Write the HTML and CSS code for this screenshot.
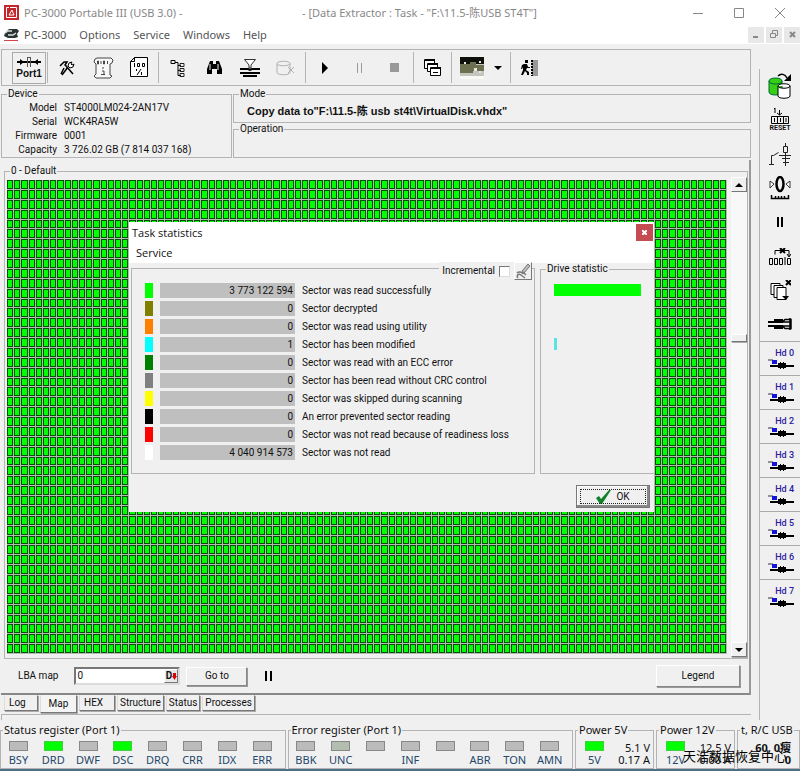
FILE: index.html
```html
<!DOCTYPE html>
<html lang="en">
<head>
    <meta charset="UTF-8">
    <meta name="viewport" content="width=device-width, initial-scale=1.0">
    <title>PC-3000 Portable III</title>
    <link rel="stylesheet" href="styles.css">
</head>
<body>
    <svg class="defs" aria-hidden="true">
        <symbol id="hd" viewBox="0 0 26 10">
            <path d="M0 1h5" stroke="#333" fill="none"/>
            <rect x="4" y="1" width="5" height="4" fill="#1414d8"/>
            <path d="M2 7h24" stroke="#000" stroke-width="2"/>
            <path d="M10 4h2v-1h1v1h2v-1h1v1h2v5h-2v1h-1v-1h-2v1h-1v-1h-2z"/>
        </symbol>
    </svg>

    <header>
        <div class="titlebar">
            <svg class="logo" width="15" height="15" viewBox="0 0 15 15">
                <rect width="15" height="15" fill="#c4262c"/>
                <path d="M5 2.500H2.500v10H5M6 2.500h6.500v10H5M5 10l3-5 2 5z" fill="none" stroke="#fff"/>
            </svg>
            <span class="app-name">PC-3000 Portable III (USB 3.0) -</span>
            <span class="doc-name">- [Data Extractor : Task - "F:\11.5-陈USB ST4T"]</span>
            <div class="window-buttons">
                <button aria-label="Minimize"><svg width="10" height="10"><path d="M0 5.500h10"/></svg></button>
                <button aria-label="Maximize"><svg width="10" height="10"><path d="M.5 .5h9v9h-9z"/></svg></button>
                <button aria-label="Close"><svg width="10" height="10"><path d="M0 0l10 10M10 0L0 10"/></svg></button>
            </div>
        </div>
        <nav class="menubar">
            <svg width="15" height="14" viewBox="0 0 15 14">
                <path d="M1 5L5 1h8l2 2-2 3 1 3-3 1H4L0 8z" fill="#2b3434"/>
                <path d="M1 5l3-2h4M4 7h5l3-2" stroke="#ddd" stroke-width="1.500" fill="none"/>
                <path d="M0 12.500h14" stroke="#d2434a"/>
            </svg>
            <button>PC-3000</button>
            <button>Options</button>
            <button>Service</button>
            <button>Windows</button>
            <button>Help</button>
            <div class="child-buttons">
                <button aria-label="Minimize child"><svg width="9" height="9"><path d="M1 7h5" stroke-width="2"/></svg></button>
                <button aria-label="Restore child"><svg width="9" height="9"><path d="M2.500 3V.5h5v5H6M.5 3.500h5v4h-5z"/></svg></button>
                <button aria-label="Close child"><svg width="9" height="9"><path d="M2 2l5 5M7 2L2 7" stroke-width="2"/></svg></button>
            </div>
        </nav>
    </header>

    <div class="workspace">
        <main>
            <div class="toolbar">
                <button class="port">
                    <svg width="26" height="13" viewBox="0 0 26 13"><path d="M1 6h24" stroke="#000" stroke-width="2"/><path d="M4 3l4 3-4 3zM22 3l-4 3 4 3z"/><path d="M11.500 1v10M14.500 1v10M11 1.500h4" stroke="#555" fill="none"/></svg>
                    Port1
                </button>
                <span class="sep"></span>
                <button aria-label="Tools"><svg width="16" height="16" viewBox="0 0 16 16"><path d="M1 6l4-4h3L6 5l2 2M7 6l7 8M5 8l-3 6M9 7l-6 8" fill="none" stroke="#000" stroke-width="1.500"/><path d="M13 2l-3 1-1 3 2 2 3-1 1-3-2 1-1-1z" fill="#fff" stroke="#000"/></svg></button>
                <button aria-label="Script"><svg width="21" height="22" viewBox="0 0 21 22"><path d="M4 1h14l2 2-1 3-2 1v11l2 1-2 2H3l-2-2 2-2V7L1 5l1-3z" fill="#f8f8f8" stroke="#444"/><path d="M4.500 4h1v3h-1zM8 4v3M10.500 4h1v3h-1zM14.500 4v3M10 10v2M9 14h2v3M8 17.500h4" fill="none" stroke="#444"/></svg></button>
                <button aria-label="Percent"><svg width="18" height="21" viewBox="0 0 18 21"><path d="M4.500 .5h13v19H.5V4.500zM.5 4.500h4v-4" fill="#fff" stroke="#000"/><path d="M4.500 6v4M7.500 6.500h2v3h-2zM12.500 6.500h2v3h-2zM6.500 12v2M11 12l-4 6M11.500 15v3" stroke="#000" fill="none"/></svg></button>
                <span class="sep"></span>
                <button aria-label="Tree"><svg width="16" height="18" viewBox="0 0 16 18"><path d="M1 1.500h4v3H1zM5 3.500h3v13h3M8 6.500h3M8 11.500h3" fill="none" stroke="#000"/><path d="M10 4.500h4v3h-4zM10 9.500h4v3h-4zM10 14.500h4v3h-4z" fill="none" stroke="#222"/></svg></button>
                <button aria-label="Find"><svg width="15" height="13" viewBox="0 0 15 13"><path d="M3 0h3v4h3V0h3l3 8v5h-5V8H5v5H0V8zM6 3h3v3H6z"/><path d="M3 3v6M11 3v6" stroke="#eee"/></svg></button>
                <button aria-label="Filter"><svg width="20" height="18" viewBox="0 0 20 18"><path d="M4.500 .5h11L11 6v3H9V6z" fill="#fff" stroke="#333"/><path d="M0 10h8l2 1 2-1h8M0 14h20M3 17h14" stroke="#000" stroke-width="2" fill="none"/></svg></button>
                <button aria-label="Database"><svg width="20" height="16" viewBox="0 0 20 16"><path d="M1 3.500c0-3 13-3 13 0v9c0 3-13 3-13 0zM1 3.500c0 3 13 3 13 0M12 7l6 6M18 7l-6 6" fill="none" stroke="#b0b0b0"/></svg></button>
                <span class="sep"></span>
                <button class="slim" aria-label="Start"><svg width="6" height="12"><path d="M0 0l6 6-6 6z"/></svg></button>
                <button class="slim" aria-label="Pause"><svg width="7" height="10"><path d="M1.500 0v10M5.500 0v10" stroke="#999"/></svg></button>
                <button class="slim" aria-label="Stop"><svg width="9" height="9"><path d="M0 0h9v9H0z" fill="#999"/></svg></button>
                <span class="sep"></span>
                <button class="slim" aria-label="Cascade"><svg width="18" height="18" viewBox="0 0 18 18"><g fill="#fff" stroke="#000"><path d="M.5 .5h10v9h-10z"/><path d="M3.500 4.500h10v8h-10z"/><path d="M6.500 8.500h10v8h-10z"/></g><path d="M1 1h10M4 5h10M7 9h10" stroke="#000" stroke-width="2"/><path d="M9 13.500h5" stroke="#000"/></svg></button>
                <span class="sep"></span>
                <button class="picture" aria-label="View map"><svg width="24" height="22" viewBox="0 0 24 22"><path d="M0 0h24v22H0z" fill="#c4c5bc"/><path d="M0 0h24v7H0z" fill="#0c0f0a"/><path d="M0 7h10V5h6v3h8v6H13v2H0z" fill="#6d7050"/><path d="M4 5h2v2H4zM19 4h2v2h-2zM14 11h3v3h-3zM19 14h2v2h-2z" fill="#e8e8df"/><path d="M0 19h24v3H0z" fill="#f8f8f5"/></svg>
                    <svg width="8" height="4"><path d="M0 0h8L4 4z"/></svg></button>
                <span class="sep"></span>
                <button class="slim" aria-label="Exit"><svg width="17" height="16" viewBox="0 0 17 16"><path d="M4 0h3v3H4zM3 4h3l1 3h2v1H6l-1 2 3 2v3H6v-2l-2-2-2 4H0l2-5V7L1 9H0l1-4z"/><path d="M11 0h6v16h-6z" fill="#999"/><path d="M11 0v16" stroke="#000" stroke-width="2" stroke-dasharray="2 1"/></svg></button>
            </div>

            <div class="info">
                <fieldset class="device">
                    <legend>Device</legend>
                    <dl>
                        <dt>Model</dt><dd>ST4000LM024-2AN17V</dd>
                        <dt>Serial</dt><dd>WCK4RA5W</dd>
                        <dt>Firmware</dt><dd>0001</dd>
                        <dt>Capacity</dt><dd>3 726.02 GB (7 814 037 168)</dd>
                    </dl>
                </fieldset>
                <div class="modes">
                    <fieldset>
                        <legend>Mode</legend>
                        <p>Copy data to"F:\11.5-陈 usb st4t\VirtualDisk.vhdx"</p>
                    </fieldset>
                    <fieldset>
                        <legend>Operation</legend>
                    </fieldset>
                </div>
            </div>

            <section class="map-panel">
                <fieldset class="map-box">
                    <legend>0 - Default</legend>
                    <div class="map-row">
                        <div class="map-area"><canvas id="map"></canvas></div>
                        <div class="scrollbar">
                            <button aria-label="Scroll up"><svg width="8" height="4"><path d="M4 0l4 4H0z"/></svg></button>
                            <div class="track"><div class="thumb"></div></div>
                            <button aria-label="Scroll down"><svg width="8" height="4"><path d="M0 0h8L4 4z"/></svg></button>
                        </div>
                    </div>
                </fieldset>
                <div class="lba">
                    <label for="lba">LBA map</label>
                    <div class="lba-input">
                        <input type="text" id="lba" value="0">
                        <button>D<svg width="5" height="7"><path d="M1 0h3v3h1L2.500 7 0 3h1z" fill="#d00"/></svg></button>
                    </div>
                    <button class="btn">Go to</button>
                    <button class="plain" aria-label="Pause map"><svg width="7" height="10"><path d="M1 0v10M6 0v10" stroke="#000" stroke-width="2"/></svg></button>
                    <button class="btn legend-btn">Legend</button>
                </div>
            </section>
            <div class="tabs">
                <button class="log">Log</button>
                <button class="active">Map</button>
                <button class="hex">HEX</button>
                <button>Structure</button>
                <button>Status</button>
                <button>Processes</button>
            </div>
            <div class="tab-line"></div>
        </main>

        <aside>
            <button aria-label="Copy database"><svg width="24" height="27" viewBox="0 0 24 27"><path d="M1 8c0-4 13-4 13 0v11c0 4-13 4-13 0z" fill="#35d015" stroke="#063"/><path d="M1 8c0 4 13 4 13 0" fill="none" stroke="#063"/><path d="M10 13c0-3 12-3 12 0v10c0 3-12 3-12 0zM10 13c0 3 12 3 12 0" fill="#fff" stroke="#000"/><path d="M10 3c3-3 7-2 9 2" fill="none" stroke="#000" stroke-width="1.500"/><path d="M23 1v7h-7z"/></svg></button>
            <button class="reset" aria-label="Reset"><svg width="18" height="16" viewBox="0 0 18 16"><path d="M3 1l1-1v5M8.500 2v5M6 5l2.500 2L11 5M.5 8.500h17v7H.5zM6.500 8v8M12.500 8v8" fill="none" stroke="#000"/><path d="M3.500 10v4M9.500 10v4M15 10v4" fill="none" stroke="#000"/></svg>RESET</button>
            <button aria-label="Power"><svg width="22" height="23" viewBox="0 0 22 23"><path d="M0 21.500h5M2.500 21V12.500h2l5-3M16.500 0v3M14.500 3.500h4v6h-4zM16.500 10v13M10 12.500h12M13 15.500h8M14 19.500h6" fill="none" stroke="#222"/></svg></button>
            <button class="zero" aria-label="Recalibrate"><svg width="22" height="24" viewBox="0 0 22 24"><ellipse cx="11" cy="8" rx="3.500" ry="7" fill="none" stroke="#000" stroke-width="2.500"/><path d="M1 5l4 3-4 4zM21 5l-4 3 4 4z" fill="#fff" stroke="#333"/><path d="M2.500 19v3.500h17V19M6.500 20v3M9.500 20v3M12.500 20v3M15.500 20v3" fill="none" stroke="#000" stroke-width="1.500"/></svg></button>
            <button aria-label="Pause drive"><svg width="6" height="10"><path d="M1 0v10M5 0v10" stroke="#000" stroke-width="2"/></svg></button>
            <button aria-label="Sectors"><svg width="22" height="17" viewBox="0 0 22 17"><path d="M6 6.500V2.500h14V8M18 6l2 3 2-3" fill="none" stroke="#000"/><path d="M11 0l5 5M16 0l-5 5" stroke="#000" stroke-width="2"/><path d="M.5 10.500h3v6h-3zM5.500 10.500h3v6h-3zM10.500 10.500h3v6h-3zM18.500 10.500h3v6h-3zM16 9v8" fill="none" stroke="#000"/></svg></button>
            <button aria-label="Copy pages"><svg width="21" height="21" viewBox="0 0 21 21"><g fill="#fff" stroke="#000"><path d="M1 3.500h9v11H1z"/><path d="M4 5.500h9v12H4z"/><path d="M7 7.500h9v12H7z"/></g><path d="M16 0l5 5M21 0l-5 5" stroke="#000" stroke-width="2"/><path d="M12 16h7l-3 4z"/></svg></button>
            <button aria-label="Connector"><svg width="24" height="12" viewBox="0 0 24 12"><path d="M0 4h14M0 8h14" stroke="#000" stroke-width="2"/><path d="M6 1h9v4H6zM6 7h9v4H6z"/><path d="M14 4.500l3-3h6v9h-6l-3-3M15 4h8M15 8h8M22 0v12" stroke="#000" stroke-width="1.500" fill="none"/></svg></button>
            <button class="hd">Hd 0<svg width="26" height="10"><use href="#hd"/></svg></button>
            <button class="hd">Hd 1<svg width="26" height="10"><use href="#hd"/></svg></button>
            <button class="hd">Hd 2<svg width="26" height="10"><use href="#hd"/></svg></button>
            <button class="hd">Hd 3<svg width="26" height="10"><use href="#hd"/></svg></button>
            <button class="hd">Hd 4<svg width="26" height="10"><use href="#hd"/></svg></button>
            <button class="hd">Hd 5<svg width="26" height="10"><use href="#hd"/></svg></button>
            <button class="hd">Hd 6<svg width="26" height="10"><use href="#hd"/></svg></button>
            <button class="hd">Hd 7<svg width="26" height="10"><use href="#hd"/></svg></button>
        </aside>
    </div>

    <footer>
        <fieldset class="register">
            <legend>Status register (Port 1)</legend>
            <div class="leds">
                <span><i></i>BSY</span>
                <span><i class="on"></i>DRD</span>
                <span><i></i>DWF</span>
                <span><i class="on"></i>DSC</span>
                <span><i></i>DRQ</span>
                <span><i></i>CRR</span>
                <span><i></i>IDX</span>
                <span><i></i>ERR</span>
            </div>
        </fieldset>
        <fieldset class="register">
            <legend>Error register (Port 1)</legend>
            <div class="leds">
                <span><i></i>BBK</span>
                <span><i class="dim"></i>UNC</span>
                <span><i></i></span>
                <span><i></i>INF</span>
                <span><i></i></span>
                <span><i></i>ABR</span>
                <span><i></i>TON</span>
                <span><i></i>AMN</span>
            </div>
        </fieldset>
        <fieldset class="power">
            <legend>Power 5V</legend>
            <div class="leds">
                <span><i class="on"></i>5V</span>
                <p>5.1 V<br>0.17 A</p>
            </div>
        </fieldset>
        <fieldset class="power">
            <legend>Power 12V</legend>
            <div class="leds">
                <span><i class="on"></i>12V</span>
                <p>12.5 V<br>0.00 A</p>
            </div>
        </fieldset>
        <fieldset class="usb">
            <legend>t, R/C USB</legend>
            <p>60, 0瘦<br>0</p>
        </fieldset>
        <div class="watermark">天浩数据恢复中心</div>
    </footer>

    <div class="dialog" role="dialog" aria-labelledby="dialog-title">
        <div class="dialog-title">
            <span id="dialog-title">Task statistics</span>
            <button aria-label="Close dialog"><svg width="5" height="5"><path d="M0 0l5 5M5 0L0 5" stroke="#fff" stroke-width="2"/></svg></button>
        </div>
        <div class="dialog-menu"><button>Service</button></div>
        <div class="dialog-body">
            <div class="stats">
                <div class="incremental">
                    <label for="inc">Incremental</label>
                    <input type="checkbox" id="inc">
                    <button aria-label="Clear"><svg width="16" height="16" viewBox="0 0 16 16"><path d="M7 8l6-7 2 2-6 7z" fill="#bbb" stroke="#777"/><path d="M2 10c2-2 5-1 6 1M3 15c-2-2 0-5 3-3l4 3M8 9l3 3" fill="none" stroke="#777" stroke-width="1.500"/></svg></button>
                </div>
                <table>
                    <tr><td class="c-read"></td><td>3 773 122 594</td><td>Sector was read successfully</td></tr>
                    <tr><td class="c-decrypted"></td><td>0</td><td>Sector decrypted</td></tr>
                    <tr><td class="c-utility"></td><td>0</td><td>Sector was read using utility</td></tr>
                    <tr><td class="c-modified"></td><td>1</td><td>Sector has been modified</td></tr>
                    <tr><td class="c-ecc"></td><td>0</td><td>Sector was read with an ECC error</td></tr>
                    <tr><td class="c-crc"></td><td>0</td><td>Sector has been read without CRC control</td></tr>
                    <tr><td class="c-skipped"></td><td>0</td><td>Sector was skipped during scanning</td></tr>
                    <tr><td class="c-error"></td><td>0</td><td>An error prevented sector reading</td></tr>
                    <tr><td class="c-readiness"></td><td>0</td><td>Sector was not read because of readiness loss</td></tr>
                    <tr><td class="c-notread"></td><td>4 040 914 573</td><td>Sector was not read</td></tr>
                </table>
            </div>
            <fieldset class="drive-stat">
                <legend>Drive statistic</legend>
                <div class="bar bar-read"></div>
                <div class="bar bar-modified"></div>
            </fieldset>
        </div>
        <div class="dialog-footer">
            <button class="ok"><svg width="15" height="14" viewBox="0 0 15 14"><path d="M0 8l3-2 2 3 8-9h2L6 14H4z" fill="#12812c"/></svg>OK</button>
        </div>
    </div>

    <script src="script.js"></script>
</body>
</html>
```
FILE: styles.css
```css
* {
    box-sizing: border-box;
}
body {
    margin: 0;
    min-height: 100vh;
    position: relative;
    display: flex;
    flex-direction: column;
    background-color: #f0f0f0;
    font-family: Roboto, "Noto Sans CJK SC", sans-serif;
    font-size: 10px;
    line-height: 14px;
    color: #111;
}
button, input {
    font: inherit;
    color: inherit;
}
button {
    padding: 0;
    border: none;
    background: none;
    display: flex;
    align-items: center;
    justify-content: center;
}
svg {
    flex: none;
    display: block;
}
p, dl, dd {
    margin: 0;
}
fieldset {
    margin: 0;
    padding: 0;
    min-width: 0;
    border: 1px solid #b4b4b4;
}
legend {
    margin-left: 5px;
    padding: 0 1px;
    line-height: 12px;
}
.defs {
    position: absolute;
    width: 0;
    height: 0;
}

/* header */
.titlebar, .menubar {
    display: flex;
    align-items: center;
    background-color: #fff;
    font-family: "Noto Sans", "Noto Sans CJK SC", sans-serif;
    font-size: 11px;
    color: #888;
}
.titlebar {
    height: 25px;
    padding-left: 4px;
}
.app-name {
    width: 278px;
    margin-left: 5px;
}
.window-buttons {
    display: flex;
    margin-left: auto;
}
.window-buttons button {
    width: 41px;
    height: 24px;
}
.window-buttons svg, .child-buttons svg {
    fill: none;
    stroke: #888;
}
.menubar {
    height: 19px;
    padding-left: 4px;
    gap: 13px;
    color: #555;
}
.menubar > svg {
    margin-right: -8px;
}
.child-buttons {
    display: flex;
    gap: 2px;
    margin-left: auto;
}
.child-buttons button {
    width: 16px;
    height: 16px;
    background-color: #e8e8e8;
}

.workspace {
    flex: 1;
    display: flex;
    margin-top: 5px;
}
main {
    flex: 1;
    min-width: 0;
    display: flex;
    flex-direction: column;
    padding-left: 1px;
}

/* toolbar */
.toolbar {
    display: flex;
    align-items: center;
    height: 37px;
    border: 1px solid #b4b4b4;
    padding-left: 10px;
}
.toolbar button {
    width: 36px;
    height: 32px;
}
.toolbar .slim {
    width: 35px;
}
.toolbar .port {
    flex-direction: column;
    width: 34px;
    border: 1px solid #aaa;
    font-family: "Liberation Sans", sans-serif;
    font-size: 10px;
    line-height: 10px;
    font-weight: bold;
}
.toolbar .picture {
    width: 56px;
    gap: 10px;
}
.sep {
    width: 1px;
    height: 31px;
    margin: 0 1px;
    background-color: #b4b4b4;
}

/* device and mode */
.info {
    display: flex;
    gap: 1px;
    margin-top: 2px;
}
.device {
    width: 231px;
}
.device dl {
    display: grid;
    grid-template-columns: 55px 1fr;
    column-gap: 7px;
    padding: 1px 0 0;
}
dt {
    text-align: right;
}
.modes {
    flex: 1;
    display: flex;
    flex-direction: column;
}
.modes fieldset {
    flex: 1;
}
.modes p {
    padding: 5px 0 0 13px;
    font-family: "Liberation Sans", "Noto Sans CJK SC", sans-serif;
    font-size: 11px;
    line-height: 12px;
    font-weight: bold;
}

/* map */
.map-panel {
    flex: 1;
    display: flex;
    flex-direction: column;
    margin-top: 2px;
    padding: 5px 1px 0 3px;
    border-right: 2px solid #999;
    border-bottom: 2px solid #888;
}
.map-box {
    flex: 1;
    display: flex;
    flex-direction: column;
}
.map-row {
    flex: 1;
    display: flex;
    gap: 4px;
    padding: 0 0 1px 2px;
    height: 100%;
}
.map-area {
    flex: 1;
    min-width: 0;
    position: relative;
    margin: 3px 0;
}
.map-area canvas {
    position: absolute;
    width: 100%;
    height: 100%;
}
.scrollbar {
    width: 16px;
    display: flex;
    flex-direction: column;
}
.scrollbar button, .thumb {
    width: 16px;
    height: 15px;
    border: 1px solid;
    border-color: #fff #777 #777 #fff;
    box-shadow: 1px 1px 0 #aaa;
}
.track {
    flex: 1;
    background-color: #f8f8f8;
}
.thumb {
    height: 8px;
    margin-top: 142px;
    background-color: #f0f0f0;
}
.lba {
    display: flex;
    align-items: center;
    height: 34px;
    padding-left: 14px;
}
.lba-input {
    display: flex;
    width: 106px;
    height: 18px;
    margin: 0 6px 0 16px;
    border: 2px solid;
    border-color: #777 #ddd #ddd #777;
    background-color: #fff;
}
.lba-input input {
    flex: 1;
    min-width: 0;
    padding: 0 1px;
    border: none;
}
.lba-input button {
    width: 14px;
    background-color: #e8e8e8;
    border: 1px solid;
    border-color: #fff #777 #777 #fff;
    font-weight: bold;
}
.btn {
    width: 61px;
    height: 19px;
    border: 1px solid;
    border-color: #fff #888 #888 #fff;
    box-shadow: 1px 1px 0 #999;
}
.plain {
    margin-left: 18px;
}
.legend-btn {
    width: 84px;
    height: 22px;
    margin: 0 8px 0 auto;
}

/* tabs */
.tabs {
    display: flex;
    gap: 2px;
    height: 18px;
    padding-left: 3px;
}
.tabs button {
    height: 16px;
    padding: 0 2px;
    border: 1px solid;
    border-color: transparent #777 #777 #ddd;
    box-shadow: 1px 1px 0 #aaa;
}
.tabs .active {
    height: 18px;
    width: 37px;
    background-color: #f4f4f4;
}
.tabs .log {
    width: 34px;
    padding-left: 4px;
    justify-content: flex-start;
}
.tabs .hex {
    width: 36px;
    padding-left: 4px;
    justify-content: flex-start;
}
.tab-line {
    height: 6px;
    margin-top: 1px;
    border-top: 1px solid #b4b4b4;
    border-left: 1px solid #b4b4b4;
}

/* right bar */
aside {
    width: 41px;
    margin: 20px 0 0 8px;
    border-left: 1px solid #b4b4b4;
}
aside button {
    width: 100%;
    height: 34px;
}
aside .reset {
    flex-direction: column;
    gap: 1px;
    font-size: 7px;
    line-height: 7px;
    font-weight: bold;
}
aside .hd {
    flex-direction: column;
    align-items: flex-end;
    padding-right: 6px;
    border-top: 1px solid #aaa;
    font-size: 9px;
    font-weight: 500;
    line-height: 11px;
    color: #2a1aa0;
}

/* registers */
footer {
    display: flex;
    gap: 2px;
    position: relative;
    margin-top: 4px;
    border-bottom: 2px solid #4d7088;
    font-family: "Noto Sans", "Noto Sans CJK SC", sans-serif;
    font-size: 11px;
}
footer legend {
    margin-left: 2px;
}
.register {
    flex: 1;
}
.leds {
    display: flex;
    padding-bottom: 1px;
}
.register .leds {
    padding-right: 5px;
}
.leds span {
    flex: 1;
    display: flex;
    flex-direction: column;
    align-items: center;
    gap: 2px;
    color: #24476b;
}
.leds i {
    width: 19px;
    height: 10px;
    margin-top: 5px;
    background-color: #bbb;
    border: 1px solid #888;
}
.leds .on {
    background-color: #0f0;
    border-color: #4c4;
}
.leds .dim {
    background-color: #b4beb0;
}
.power {
    width: 79px;
}
footer p {
    flex: 1;
    padding: 6px 3px 0 0;
    line-height: 12px;
    text-align: right;
}
.usb {
    width: 63px;
}
.usb p {
    font-weight: bold;
    padding-right: 8px;
}
.watermark {
    position: absolute;
    right: 13px;
    bottom: 6px;
    font-family: "Noto Sans CJK SC", sans-serif;
    font-size: 13px;
    color: #000;
}

/* dialog */
.dialog {
    position: absolute;
    left: 129px;
    top: 222px;
    width: 525px;
    background-color: #f0f0f0;
}
.dialog-title, .dialog-menu {
    display: flex;
    background-color: #fff;
    font-family: "Open Sans", sans-serif;
    font-size: 11px;
}
.dialog-title {
    justify-content: space-between;
    height: 21px;
    padding: 2px 1px 0 3px;
    line-height: 18px;
}
.dialog-title button {
    width: 17px;
    height: 17px;
    background-color: #c44c52;
}
.dialog-menu {
    height: 20px;
    padding-left: 7px;
}
.dialog-body {
    display: flex;
    gap: 5px;
    padding-left: 2px;
}
.stats {
    position: relative;
    flex: 1;
    margin-top: 5px;
    border: 1px solid #b4b4b4;
    padding: 14px 0 10px 13px;
}
.incremental {
    position: absolute;
    right: 2px;
    top: -7px;
    display: flex;
    align-items: center;
    gap: 4px;
    padding-left: 3px;
    background-color: #f0f0f0;
}
.incremental input {
    appearance: none;
    width: 11px;
    height: 11px;
    margin: 0;
    border: 1px solid;
    border-color: #777 #ddd #ddd #777;
    background-color: #fff;
}
.incremental button {
    width: 18px;
    height: 18px;
    border: 1px solid;
    border-color: #fff #777 #777 #fff;
}
.stats table {
    border-spacing: 0;
}
.stats td {
    height: 18px;
    padding: 0;
    border-bottom: 3px solid #f0f0f0;
    white-space: nowrap;
}
.stats td:first-child {
    width: 8px;
}
.stats td:nth-child(2) {
    width: 142px;
    padding-right: 2px;
    border-left: 7px solid #f0f0f0;
    background-color: #bfbfbf;
    text-align: right;
}
.stats td:last-child {
    padding-left: 7px;
}
.c-read { background-color: #0f0; }
.c-decrypted { background-color: #808000; }
.c-utility { background-color: #ff8000; }
.c-modified { background-color: #0ff; }
.c-ecc { background-color: #008000; }
.c-crc { background-color: #808080; }
.c-skipped { background-color: #ff0; }
.c-error { background-color: #000; }
.c-readiness { background-color: #f00; }
.c-notread { background-color: #fff; }
.drive-stat {
    width: 114px;
    border-right: none;
}
.bar {
    height: 12px;
    margin: 9px 13px 0;
}
.bar-read {
    background-color: #0f0;
}
.bar-modified {
    width: 3px;
    margin-top: 42px;
    background-color: #5de0e6;
}
.dialog-footer {
    display: flex;
    justify-content: flex-end;
    padding: 11px 4px 4px;
}
.ok {
    gap: 5px;
    width: 74px;
    height: 23px;
    border: 1px solid #777;
    box-shadow: inset -2px -2px 0 #888, inset 1px 1px 0 #fff;
    outline: 1px dotted #222;
    outline-offset: -5px;
}
```
FILE: script.js
```js
const COLUMNS = 100;
const ROWS = 48;

function drawMap() {
    const canvas = document.getElementById('map');
    const ctx = canvas.getContext('2d');
    canvas.width = canvas.clientWidth;
    canvas.height = canvas.clientHeight;
    ctx.fillStyle = '#b0bcb0';
    ctx.fillRect(0, 0, canvas.width, canvas.height);

    for (let row = 0; row < ROWS; row++) {
        const y = Math.round(row * canvas.height / ROWS);
        const h = Math.round((row + 1) * canvas.height / ROWS) - y - 1;
        for (let col = 0; col < COLUMNS; col++) {
            const x = Math.round(col * canvas.width / COLUMNS);
            const w = Math.round((col + 1) * canvas.width / COLUMNS) - x - 1;
            ctx.fillStyle = '#064f06';
            ctx.fillRect(x, y, w, h);
            ctx.fillStyle = '#0f0';
            ctx.fillRect(x + 1, y + 1, w - 2, h - 2);
        }
    }
}

drawMap();
window.addEventListener('resize', drawMap);
```
